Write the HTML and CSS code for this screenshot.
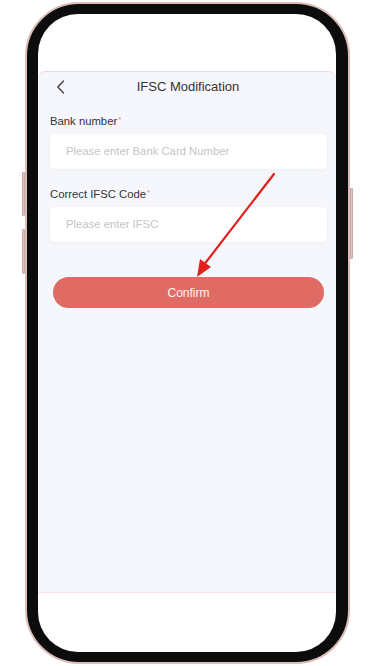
FILE: index.html
```html
<!DOCTYPE html>
<html lang="en">
<head>
<meta charset="utf-8">
<title>IFSC Modification</title>
<link rel="stylesheet" href="styles.css">
</head>
<body>
<div class="stage">
  <div class="phone">
    <span class="side-btn side-l1"></span>
    <span class="side-btn side-l2"></span>
    <span class="side-btn side-r"></span>
    <div class="screen">
      <div class="status"></div>
      <div class="card">
        <div class="header">
          <svg class="back" width="9" height="14" viewBox="0 0 9 14"><path d="M7.5 1 L1.8 7 L7.5 13" fill="none" stroke="#444" stroke-width="1.4" stroke-linecap="round" stroke-linejoin="round"/></svg>
          <div class="title">IFSC Modification</div>
          <div></div>
        </div>
        <div class="form">
          <div class="label">Bank number<span class="req">*</span></div>
          <div class="input">Please enter Bank Card Number</div>
          <div class="label label2">Correct IFSC Code<span class="req">*</span></div>
          <div class="input">Please enter IFSC</div>
          <button class="confirm">Confirm</button>
        </div>
      </div>
    </div>
  </div>
  <svg class="arrow" width="375" height="666" viewBox="0 0 375 666">
    <line x1="274" y1="174" x2="203" y2="266" stroke="#e2211d" stroke-width="2.2" stroke-linecap="round"/>
    <polygon points="197,277 200,259 211,267" fill="#e2211d"/>
  </svg>
</div>
</body>
</html>
```
FILE: styles.css
```css
html, body {
  margin: 0;
  padding: 0;
  background: #ffffff;
}
body {
  font-family: "Liberation Sans", Arial, sans-serif;
}
.stage {
  position: relative;
  width: 375px;
  height: 666px;
  overflow: hidden;
}
.phone {
  position: relative;
  box-sizing: border-box;
  margin: 2px 0 0 25px;
  width: 325px;
  height: 662px;
  border: 2px solid #dcbdb8;
  border-radius: 54px;
  background: #0c0c0c;
  padding: 10px 12px 10px 11px;
}
.side-btn {
  position: absolute;
  width: 3px;
  background: #d9c7c6;
  border: 1px solid #c9a8a6;
  box-sizing: border-box;
  border-radius: 1px;
}
.side-l1 { left: -5px; top: 168px; height: 44px; }
.side-l2 { left: -5px; top: 225px; height: 45px; }
.side-r { right: -5px; top: 184px; height: 71px; }
.screen {
  height: 100%;
  background: #ffffff;
  border-radius: 40px;
  overflow: hidden;
  display: flex;
  flex-direction: column;
}
.status {
  flex: none;
  height: 57px;
}
.card {
  flex: none;
  box-sizing: border-box;
  height: 522px;
  background: #f6f7fc;
  border-top: 1px solid #f6d3d6;
  border-bottom: 1px solid #fbe4e6;
  border-radius: 8px 8px 0 0;
}
.header {
  display: grid;
  grid-template-columns: 1fr auto 1fr;
  align-items: center;
  height: 29px;
  padding: 0 18px;
}
.back {
  display: block;
}
.title {
  font-size: 13px;
  color: #333;
  padding-left: 2px;
}
.form {
  display: flex;
  flex-direction: column;
  padding: 4px 9px 0 12px;
}
.label {
  font-size: 11.3px;
  color: #333;
  height: 14px;
  line-height: 14px;
  margin-top: 8px;
}
.label2 {
  margin-top: 17px;
}
.req {
  color: #f07a7a;
  font-size: 8px;
  vertical-align: 3px;
  margin-left: 1px;
}
.input {
  margin-top: 7px;
  height: 35px;
  line-height: 35px;
  background: #ffffff;
  border-radius: 5px;
  box-shadow: 0 1px 4px rgba(120, 130, 170, 0.07);
  padding-left: 16px;
  font-size: 11.3px;
  color: #c3c4c9;
}
.confirm {
  margin: 35px 3px 0 3px;
  height: 31px;
  border: none;
  border-radius: 16px;
  background: #e06b65;
  color: #fff4ee;
  font-family: "Liberation Sans", Arial, sans-serif;
  font-size: 12px;
  padding: 0;
}
.arrow {
  position: absolute;
  left: 0;
  top: 0;
  pointer-events: none;
}
```
